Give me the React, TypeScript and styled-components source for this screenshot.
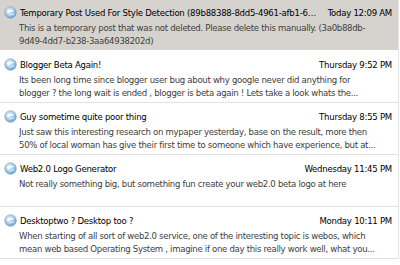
import styled, { createGlobalStyle } from "styled-components";

const Global = createGlobalStyle`
    html, body {
        margin: 0;
        padding: 0;
        background: #ffffff;
    }
    body {
        font-family: Tahoma, "DejaVu Sans Condensed", "DejaVu Sans", sans-serif;
        font-size: 9.5px;
        letter-spacing: -0.25px;
    }
`;

const List = styled.ul`
    list-style: none;
    margin: 0;
    padding: 0;
    width: 398px;
    border-right: 1px solid #e4e4e4;
`;

const Row = styled.li<{ $selected?: boolean }>`
    display: grid;
    grid-template-columns: 19px 1fr;
    height: 51px;
    padding-top: 6px;
    box-sizing: border-box;
    background: ${(p) => (p.$selected ? "#d6d3ce" : "#ffffff")};
    border-bottom: 1px solid ${(p) => (p.$selected ? "#ffffff" : "#e2e2e2")};
    margin-bottom: 1px;
`;

const IconCell = styled.div`
    padding-left: 4px;
`;

const Content = styled.div`
    min-width: 0;
    padding-right: 6px;
`;

const Header = styled.div`
    display: flex;
    align-items: baseline;
    gap: 10px;
    height: 15px;
    line-height: 13px;
    color: #000000;
`;

const Title = styled.span`
    flex: 1;
    min-width: 0;
    white-space: nowrap;
    overflow: hidden;
    text-overflow: ellipsis;
    padding-left: 1px;
`;

const Date = styled.span`
    white-space: nowrap;
`;

const Body = styled.div`
    color: #404040;
    line-height: 13px;
    letter-spacing: -0.3px;
`;

const Line = styled.div`
    white-space: nowrap;
    overflow: hidden;
`;

function ItemIcon() {
    return (
        <svg width="13" height="13" viewBox="0 0 13 13">
            <defs>
                <radialGradient id="g" cx="0.4" cy="0.35" r="0.7">
                    <stop offset="0" stopColor="#e8f3fb" />
                    <stop offset="0.6" stopColor="#9cc6e6" />
                    <stop offset="1" stopColor="#5b93c4" />
                </radialGradient>
            </defs>
            <circle cx="6.5" cy="6.5" r="5.8" fill="url(#g)" stroke="#7aa2c4" strokeWidth="0.6" />
            <path d="M2.5 5.5 C4.5 3.5 8 3.2 10.5 5 C8.5 4.8 6 5.6 4.8 7.8 C4 7 3.2 6.3 2.5 5.5 Z" fill="#ffffff" opacity="0.85" />
            <path d="M5 9.5 C6.8 8.2 8.6 8 10.4 8.5" stroke="#ffffff" strokeWidth="0.9" fill="none" opacity="0.8" />
        </svg>
    );
}

const posts = [
    {
        title: "Temporary Post Used For Style Detection (89b88388-8dd5-4961-afb1-6a3f2c1d9e77)",
        date: "Today 12:09 AM",
        lines: [
            "This is a temporary post that was not deleted. Please delete this manually. (3a0b88db-",
            "9d49-4dd7-b238-3aa64938202d)",
        ],
        selected: true,
    },
    {
        title: "Blogger Beta Again!",
        date: "Thursday 9:52 PM",
        lines: [
            "Its been long time since blogger user bug about why google never did anything for",
            "blogger ? the long wait is ended , blogger is beta again ! Lets take a look whats the...",
        ],
    },
    {
        title: "Guy sometime quite poor thing",
        date: "Thursday 8:55 PM",
        lines: [
            "Just saw this interesting research on mypaper yesterday, base on the result, more then",
            "50% of local woman has give their first time to someone which have experience, but at...",
        ],
    },
    {
        title: "Web2.0 Logo Generator",
        date: "Wednesday 11:45 PM",
        lines: ["Not really something big, but something fun  create your web2.0 beta logo at here"],
    },
    {
        title: "Desktoptwo ? Desktop too ?",
        date: "Monday 10:11 PM",
        lines: [
            "When starting of all sort of web2.0 service, one of the interesting topic is webos, which",
            "mean web based Operating System , imagine if one day this really work well, what you...",
        ],
    },
];

export default function App() {
    return (
        <>
            <Global />
            <List>
                {posts.map((post) => (
                    <Row key={post.title} $selected={post.selected}>
                        <IconCell>
                            <ItemIcon />
                        </IconCell>
                        <Content>
                            <Header>
                                <Title>{post.title}</Title>
                                <Date>{post.date}</Date>
                            </Header>
                            <Body>
                                {post.lines.map((l) => (
                                    <Line key={l}>{l}</Line>
                                ))}
                            </Body>
                        </Content>
                    </Row>
                ))}
            </List>
        </>
    );
}
